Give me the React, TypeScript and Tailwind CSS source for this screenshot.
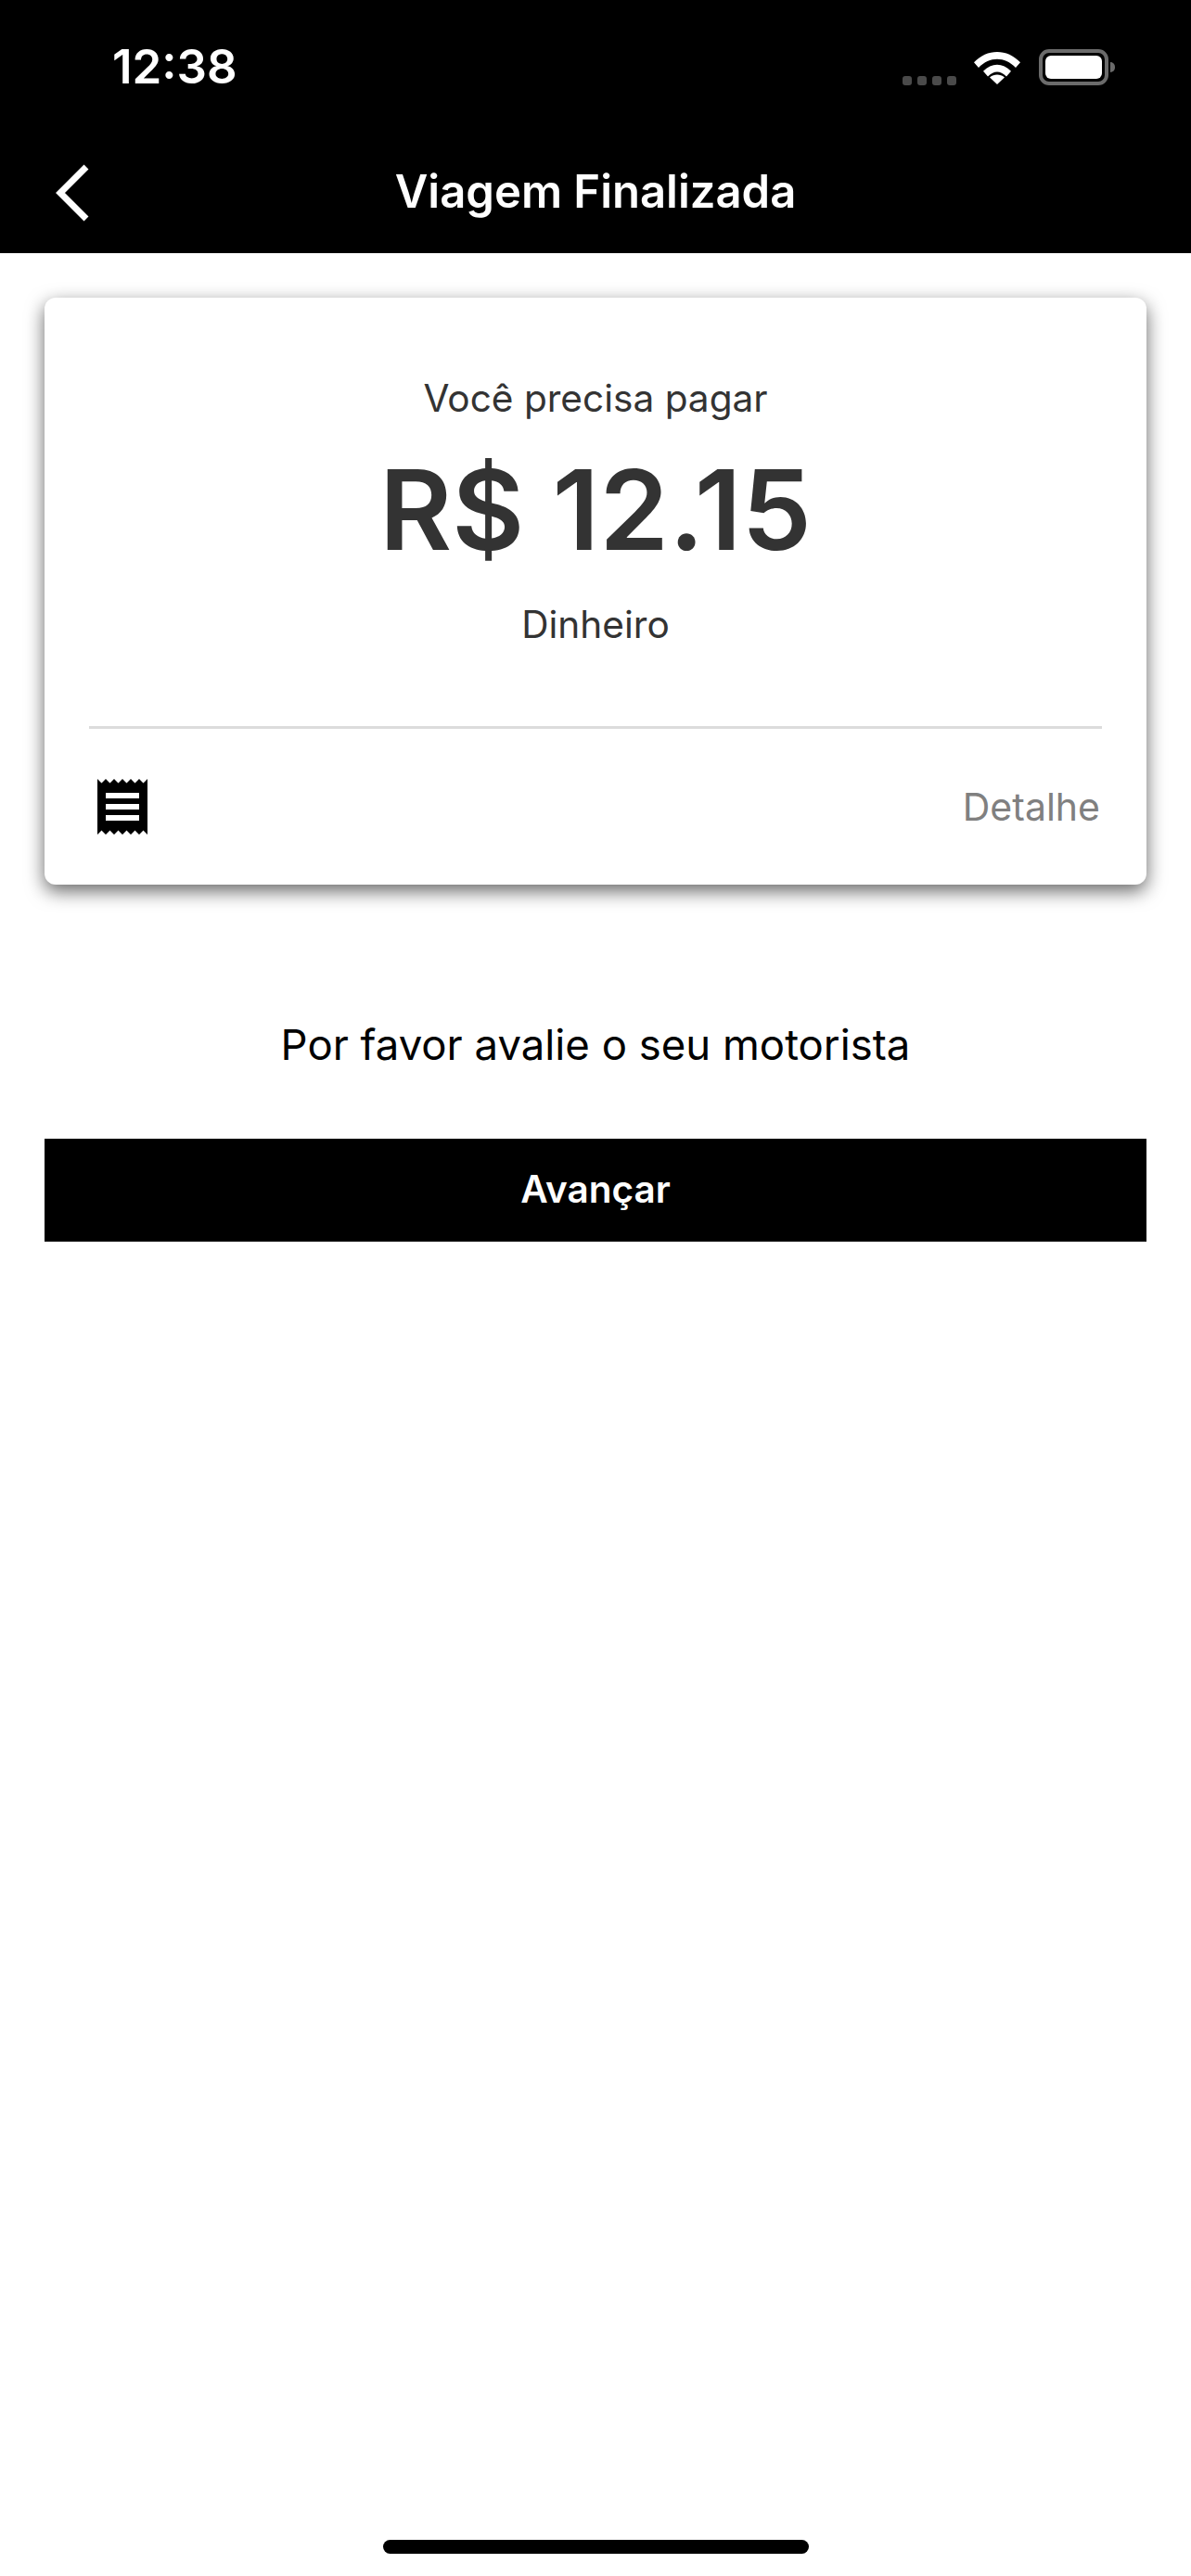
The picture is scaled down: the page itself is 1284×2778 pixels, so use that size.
import React from 'react';
import { MdReceipt } from 'react-icons/md';

const StatusBar: React.FC = () => (
    <div className="h-[146px] flex items-start justify-between pl-[121px] pr-[82px] pt-[48px]">
        <span className="text-[51px] leading-[48px] font-semibold text-white">12:38</span>
        <div className="flex items-start mt-[5px]">
            <div className="flex gap-[6px] mt-[29px] mr-[19px]">
                {[...Array(4)].map((_, i) => (
                    <div key={i} className="w-[10px] h-[10px] rounded-[3px] bg-[#4a4a4a]" />
                ))}
            </div>
            <svg width="50" height="36" viewBox="0 0 50 38" preserveAspectRatio="none" className="mt-[2px] mr-[20px]">
                <path d="M0 13 C14 -3 36 -3 50 13 L45 19 C33 6 17 6 5 19 Z" fill="#fff" />
                <path d="M10 23 C19 13 31 13 40 23 L35 29 C28 22 22 22 15 29 Z" fill="#fff" />
                <path d="M17 30 C22 26 28 26 33 30 L25 38 Z" fill="#fff" />
            </svg>
            <div className="w-[75px] h-[39px] rounded-[11px] border-[4px] border-[#6b6b6b] p-[3px]">
                <div className="w-full h-full rounded-[6px] bg-white" />
            </div>
            <div className="w-[5px] h-[11px] ml-[2px] mt-[14px] rounded-r-full bg-[#6b6b6b]" />
        </div>
    </div>
);

const App: React.FC = () => {
    return (
        <div className="h-[2778px] flex flex-col bg-white font-['Inter',sans-serif]">
            <div className="bg-black">
                <StatusBar />
                <div className="h-[127px] relative flex items-start justify-center">
                    <svg width="40" height="64" viewBox="0 0 40 64" className="absolute left-[58px] top-[30px]" fill="none">
                        <path d="M35 4 L7 32 L35 60" stroke="#fff" strokeWidth="7" />
                    </svg>
                    <h1 className="text-[49px] leading-[60px] font-semibold text-white mt-[31px]">Viagem Finalizada</h1>
                </div>
            </div>

            <div className="px-[48px] pt-[48px]">
                <div className="bg-white rounded-[12px] shadow-[0_7px_20px_rgba(0,0,0,0.6)] px-[48px] pt-[84px] pb-[48px]">
                    <p className="text-[40.6px] leading-[50px] text-[#333] text-center">Você precisa pagar</p>
                    <p className="text-[120px] leading-[140px] font-semibold text-[#333] text-center mt-[25px]">R$ 12.15</p>
                    <p className="text-[40.6px] leading-[50px] text-[#333] text-center mt-[29px]">Dinheiro</p>
                    <div className="h-[3px] bg-[#dcdcdc] mt-[84px]" />
                    <div className="flex items-center justify-between mt-[48px]">
                        <MdReceipt size={72} className="text-black" />
                        <span className="text-[41px] leading-[50px] text-[#808080] pr-[2px]">Detalhe</span>
                    </div>
                </div>

                <p className="text-[45.5px] leading-[60px] text-black text-center mt-[143px]">Por favor avalie o seu motorista</p>

                <button className="w-full h-[111px] bg-black text-white text-[40.5px] font-semibold mt-[71px]">Avançar</button>
            </div>

            <div className="flex-1" />
            <div className="w-[459px] h-[15px] rounded-full bg-black mx-auto mb-[24px]" />
        </div>
    );
};

export default App;
